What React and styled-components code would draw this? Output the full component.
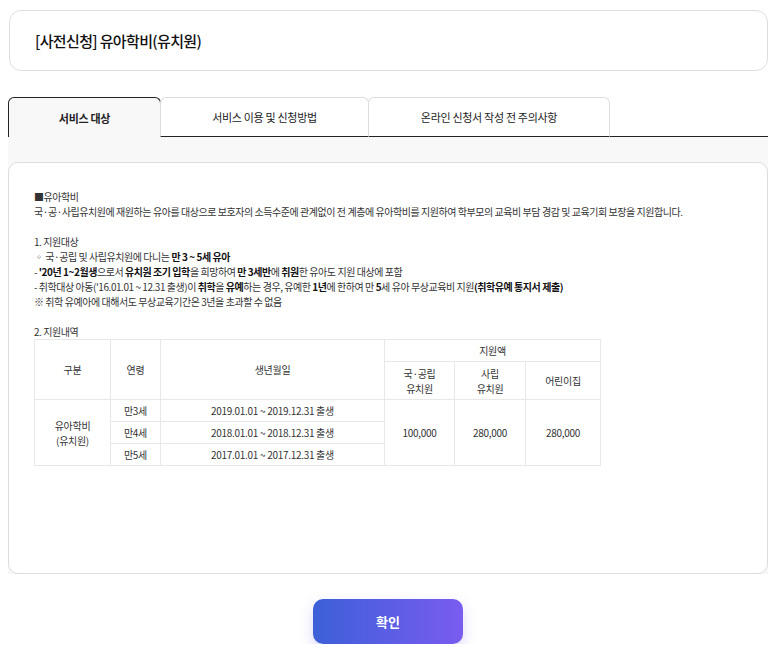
import React from "react";
import styled, { createGlobalStyle } from "styled-components";

const GlobalStyle = createGlobalStyle`
	html, body {
		margin: 0;
		padding: 0;
		background: #fff;
	}
	body {
		font-family: "Noto Sans CJK KR", "Noto Sans", sans-serif;
		color: #222;
	}
`;

const Page = styled.div`
	width: 780px;
	padding: 10px 12px 0 8px;
	box-sizing: border-box;
`;

const TitleCard = styled.div`
	margin-left: 1px;
	height: 61px;
	border: 1px solid #dedede;
	border-radius: 12px;
	display: flex;
	align-items: center;
	padding: 0 25px;
	box-sizing: border-box;
`;

const Title = styled.h1`
	margin: 0;
	font-size: 15px;
	font-weight: 500;
	color: #111;
	letter-spacing: -0.65px;
`;

const Tabs = styled.div`
	display: flex;
	margin-top: 26px;
	height: 40px;
	box-sizing: border-box;
`;

const Tab = styled.div`
	width: ${(p) => p.w}px;
	box-sizing: border-box;
	display: flex;
	align-items: center;
	justify-content: center;
	font-size: 11px;
	border-radius: 6px 6px 0 0;
	border: 1px solid ${(p) => (p.active ? "#222" : "#ddd")};
	border-bottom: ${(p) => (p.active ? "none" : "1px solid #222")};
	background: ${(p) => (p.active ? "#f8f8f8" : "#fff")};
	font-weight: ${(p) => (p.active ? 700 : 400)};
	color: #222;
	margin-left: ${(p) => (p.first ? 0 : -1)}px;
	letter-spacing: -0.3px;
`;

const TabFill = styled.div`
	flex: 1;
	border-bottom: 1px solid #222;
`;

const Panel = styled.div`
	background: #f8f8f8;
	padding-top: 25px;
`;

const ContentCard = styled.div`
	background: #fff;
	border: 1px solid #dedede;
	border-radius: 10px;
	height: 412px;
	box-sizing: border-box;
	padding: 26px 25px 0;
	font-size: 10px;
	line-height: 15px;
	color: #333;
	letter-spacing: -0.45px;
`;

const Line = styled.div`
	min-height: 15px;
	white-space: nowrap;
`;

const B = styled.b`
	font-weight: 700;
	color: #111;
`;

const Table = styled.table`
	margin-top: 0;
	border-collapse: collapse;
	font-size: 10px;
	color: #333;
	text-align: center;
	letter-spacing: -0.3px;
	td, th {
		border: 1px solid #e8e8e8;
		font-weight: 400;
		padding: 0;
		line-height: 15px;
	}
`;

const HeadRow = styled.tr`
	height: ${(p) => p.h}px;
`;

const BodyRow = styled.tr`
	height: 22px;
`;

const Footer = styled.div`
	display: flex;
	justify-content: center;
	padding-top: 25px;
`;

const ConfirmButton = styled.button`
	width: 150px;
	height: 45px;
	border: none;
	border-radius: 10px;
	background: linear-gradient(90deg, #3c60d8 0%, #7a5cf0 100%);
	box-shadow: 0 6px 14px rgba(110, 100, 220, 0.25);
	color: #fff;
	font-family: "Noto Sans CJK KR", sans-serif;
	font-size: 13px;
	font-weight: 700;
	cursor: pointer;
`;

const tabs = [
	{ label: "서비스 대상", w: 153 },
	{ label: "서비스 이용 및 신청방법", w: 209 },
	{ label: "온라인 신청서 작성 전 주의사항", w: 242 },
];

const App = () => {
	return (
		<Page>
			<GlobalStyle />
			<TitleCard>
				<Title>[사전신청] 유아학비(유치원)</Title>
			</TitleCard>
			<Tabs>
				{tabs.map((t, i) => (
					<Tab key={t.label} w={t.w} active={i === 0} first={i === 0}>
						{t.label}
					</Tab>
				))}
				<TabFill />
			</Tabs>
			<Panel>
				<ContentCard>
					<Line>■유아학비</Line>
					<Line>
						국·공·사립유치원에 재원하는 유아를 대상으로 보호자의 소득수준에 관계없이 전 계층에 유아학비를 지원하여
						학부모의 교육비 부담 경감 및 교육기회 보장을 지원합니다.
					</Line>
					<Line />
					<Line>1. 지원대상</Line>
					<Line>
						◦ 국·공립 및 사립유치원에 다니는 <B>만 3 ~ 5세 유아</B>
					</Line>
					<Line>
						- <B>'20년 1~2월생</B>으로서 <B>유치원 조기 입학</B>을 희망하여 <B>만 3세반</B>에 <B>취원</B>한 유아도 지원
						대상에 포함
					</Line>
					<Line>
						- 취학대상 아동('16.01.01 ~ 12.31 출생)이 <B>취학</B>을 <B>유예</B>하는 경우, 유예한 <B>1년</B>에 한하여 만{" "}
						<B>5</B>세 유아 무상교육비 지원<B>(취학유예 통지서 제출)</B>
					</Line>
					<Line>※ 취학 유예아에 대해서도 무상교육기간은 3년을 초과할 수 없음</Line>
					<Line />
					<Line>2. 지원내역</Line>
					<Table>
						<colgroup>
							<col style={{ width: 76 }} />
							<col style={{ width: 50 }} />
							<col style={{ width: 224 }} />
							<col style={{ width: 70 }} />
							<col style={{ width: 71 }} />
							<col style={{ width: 75 }} />
						</colgroup>
						<thead>
							<HeadRow h={22}>
								<th rowSpan={2}>구분</th>
								<th rowSpan={2}>연령</th>
								<th rowSpan={2}>생년월일</th>
								<th colSpan={3}>지원액</th>
							</HeadRow>
							<HeadRow h={38}>
								<th>
									국·공립
									<br />
									유치원
								</th>
								<th>
									사립
									<br />
									유치원
								</th>
								<th>어린이집</th>
							</HeadRow>
						</thead>
						<tbody>
							<BodyRow>
								<td rowSpan={3}>
									유아학비
									<br />
									(유치원)
								</td>
								<td>만3세</td>
								<td>2019.01.01 ~ 2019.12.31 출생</td>
								<td rowSpan={3}>100,000</td>
								<td rowSpan={3}>280,000</td>
								<td rowSpan={3}>280,000</td>
							</BodyRow>
							<BodyRow>
								<td>만4세</td>
								<td>2018.01.01 ~ 2018.12.31 출생</td>
							</BodyRow>
							<BodyRow>
								<td>만5세</td>
								<td>2017.01.01 ~ 2017.12.31 출생</td>
							</BodyRow>
						</tbody>
					</Table>
				</ContentCard>
			</Panel>
			<Footer>
				<ConfirmButton>확인</ConfirmButton>
			</Footer>
		</Page>
	);
};

export default App;
